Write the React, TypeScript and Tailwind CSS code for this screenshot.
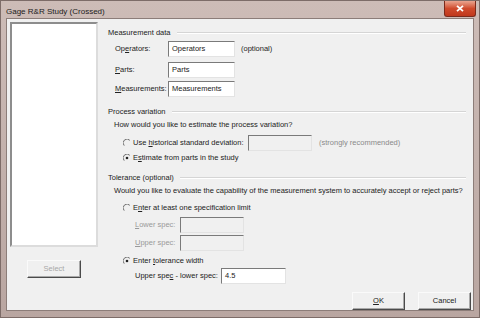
import type { ReactNode } from "react";

const FONT = { fontFamily: '"Liberation Sans", Arial, sans-serif' };

// sunken edit box
function Field({ value = "", w, disabled }: { value?: string; w: number; disabled?: boolean }) {
  return (
    <div
      className={`flex h-[16px] items-center border border-t-[#7a7a7a] border-l-[#7a7a7a] border-b-[#e3e3e3] border-r-[#e3e3e3] px-[3px] ${
        disabled ? "bg-[#f0f0f0]" : "bg-white"
      }`}
      style={{ width: w }}
    >
      <span className="text-[7.5px] text-[#222]">{value}</span>
    </div>
  );
}

function Radio({ checked }: { checked?: boolean }) {
  return (
    <span className="relative mr-[2px] inline-block h-[8px] w-[8px] shrink-0">
      <svg width="8" height="8" viewBox="0 0 8 8">
        <path d="M6.8 1.3A3.4 3.4 0 0 0 1.2 6.6" fill="none" stroke="#6d6d6d" strokeWidth="1" />
        {checked && <circle cx="4" cy="4" r="1.3" fill="#222" />}
      </svg>
    </span>
  );
}

function U({ children }: { children: ReactNode }) {
  return <span className="underline underline-offset-[1px]">{children}</span>;
}

function Group({ title, className = "" }: { title: string; className?: string }) {
  return (
    <div className={`flex h-[14px] items-center ${className}`}>
      <span className="text-[7.5px] text-[#222]">{title}</span>
      <div className="ml-[6px] h-[2px] flex-1 border-t border-b border-t-[#d5d5d5] border-b-white" />
    </div>
  );
}

function Btn({ children, disabled, w }: { children: ReactNode; disabled?: boolean; w: number }) {
  return (
    <div
      className="flex h-[18px] items-center justify-center border border-t-[#fafafa] border-l-[#fafafa] border-b-[#4a4a4a] border-r-[#4a4a4a] bg-[#f0f0f0] shadow-[inset_-1px_-1px_0_#a9a9a9]"
      style={{ width: w }}
    >
      <span className={`text-[7.5px] ${disabled ? "text-[#a8a8a8]" : "text-[#222]"}`}>{children}</span>
    </div>
  );
}

export default function App() {
  return (
    <div
      className="flex h-[318px] w-[480px] flex-col border border-[#7d6c68] bg-gradient-to-b from-[#cdbcb7] via-[#c3b1ac] to-[#b9a6a1]"
      style={FONT}
    >
      {/* title bar */}
      <div className="flex h-[20px] items-start justify-between">
        <span className="ml-[5px] mt-[5px] text-[8px] text-[#1c1c1c]">Gage R&amp;R Study (Crossed)</span>
        <div className="mr-[3px] flex h-[16px] w-[32px] items-center justify-center rounded-b-[3px] border border-t-0 border-[#7a2a1c] bg-gradient-to-b from-[#e9a48f] via-[#cf4a2c] to-[#c0381c]">
          <svg width="8" height="7" viewBox="0 0 8 7">
            <path d="M1 0.8L7 6.2M7 0.8L1 6.2" stroke="white" strokeWidth="1.8" />
          </svg>
        </div>
      </div>

      {/* client area */}
      <div className="mx-[5px] mb-[6px] flex flex-1 flex-col border border-[#8c7d79] bg-[#f0f0f0] text-[7.5px] text-[#222]">
        <div className="flex">
          {/* left: variable list + Select */}
          <div className="ml-[3px] mt-[3px] flex w-[88px] flex-col items-center">
            <div className="h-[225px] w-[88px] border-2 border-t-[#8d8d8d] border-l-[#8d8d8d] border-b-[#dcdcdc] border-r-[#dcdcdc] bg-white" />
            <div className="mt-[13px]">
              <Btn w={54} disabled>Select</Btn>
            </div>
          </div>

          {/* right: options */}
          <div className="ml-[10px] mt-[7px] flex w-[358px] flex-col">
            <Group title="Measurement data" />
            <div className="mt-[1px] flex h-[16px] items-center">
              <span className="ml-[7px] w-[53px]">
                Op<U>e</U>rators:
              </span>
              <Field value="Operators" w={67} />
              <span className="ml-[6px]">(optional)</span>
            </div>
            <div className="mt-[5px] flex h-[16px] items-center">
              <span className="ml-[7px] w-[53px]">
                <U>P</U>arts:
              </span>
              <Field value="Parts" w={67} />
            </div>
            <div className="mt-[3px] flex h-[16px] items-center">
              <span className="ml-[7px] w-[53px]">
                <U>M</U>easurements:
              </span>
              <Field value="Measurements" w={67} />
            </div>

            <Group title="Process variation" className="mt-[8px]" />
            <div className="flex h-[12px] items-center pl-[6px]">How would you like to estimate the process variation?</div>
            <div className="mt-[4px] flex h-[15px] items-center pl-[15px]">
              <Radio />
              <span className="w-[115px]">
                Use <U>h</U>istorical standard deviation:
              </span>
              <Field w={64} disabled />
              <span className="ml-[7px] text-[#8a8a8a]">(strongly recommended)</span>
            </div>
            <div className="mt-[1px] flex h-[14px] items-center pl-[15px]">
              <Radio checked />
              <span>
                E<U>s</U>timate from parts in the study
              </span>
            </div>

            <Group title="Tolerance (optional)" className="mt-[6px]" />
            <div className="flex h-[12px] items-center pl-[6px]">
              Would you like to evaluate the capability of the measurement system to accurately accept or reject parts?
            </div>
            <div className="mt-[4px] flex h-[14px] items-center pl-[15px]">
              <Radio />
              <span>
                E<U>n</U>ter at least one specification limit
              </span>
            </div>
            <div className="mt-[2px] flex h-[16px] items-center pl-[27px] text-[#9a9a9a]">
              <span className="w-[45px]">
                <U>L</U>ower spec:
              </span>
              <Field w={64} disabled />
            </div>
            <div className="mt-[2px] flex h-[16px] items-center pl-[27px] text-[#9a9a9a]">
              <span className="w-[45px]">
                <U>U</U>pper spec:
              </span>
              <Field w={64} disabled />
            </div>
            <div className="mt-[3px] flex h-[14px] items-center pl-[15px]">
              <Radio checked />
              <span>
                Enter <U>t</U>olerance width
              </span>
            </div>
            <div className="flex h-[16px] items-center pl-[27px]">
              <span className="w-[86px]">
                Upper spe<U>c</U> - lower spec:
              </span>
              <Field value="4.5" w={65} />
            </div>
          </div>
        </div>

        {/* OK / Cancel */}
        <div className="mr-[2px] mt-[8px] flex justify-end gap-[13px]">
          <Btn w={53}>
            <U>O</U>K
          </Btn>
          <Btn w={53}>Cancel</Btn>
        </div>
      </div>
    </div>
  );
}
